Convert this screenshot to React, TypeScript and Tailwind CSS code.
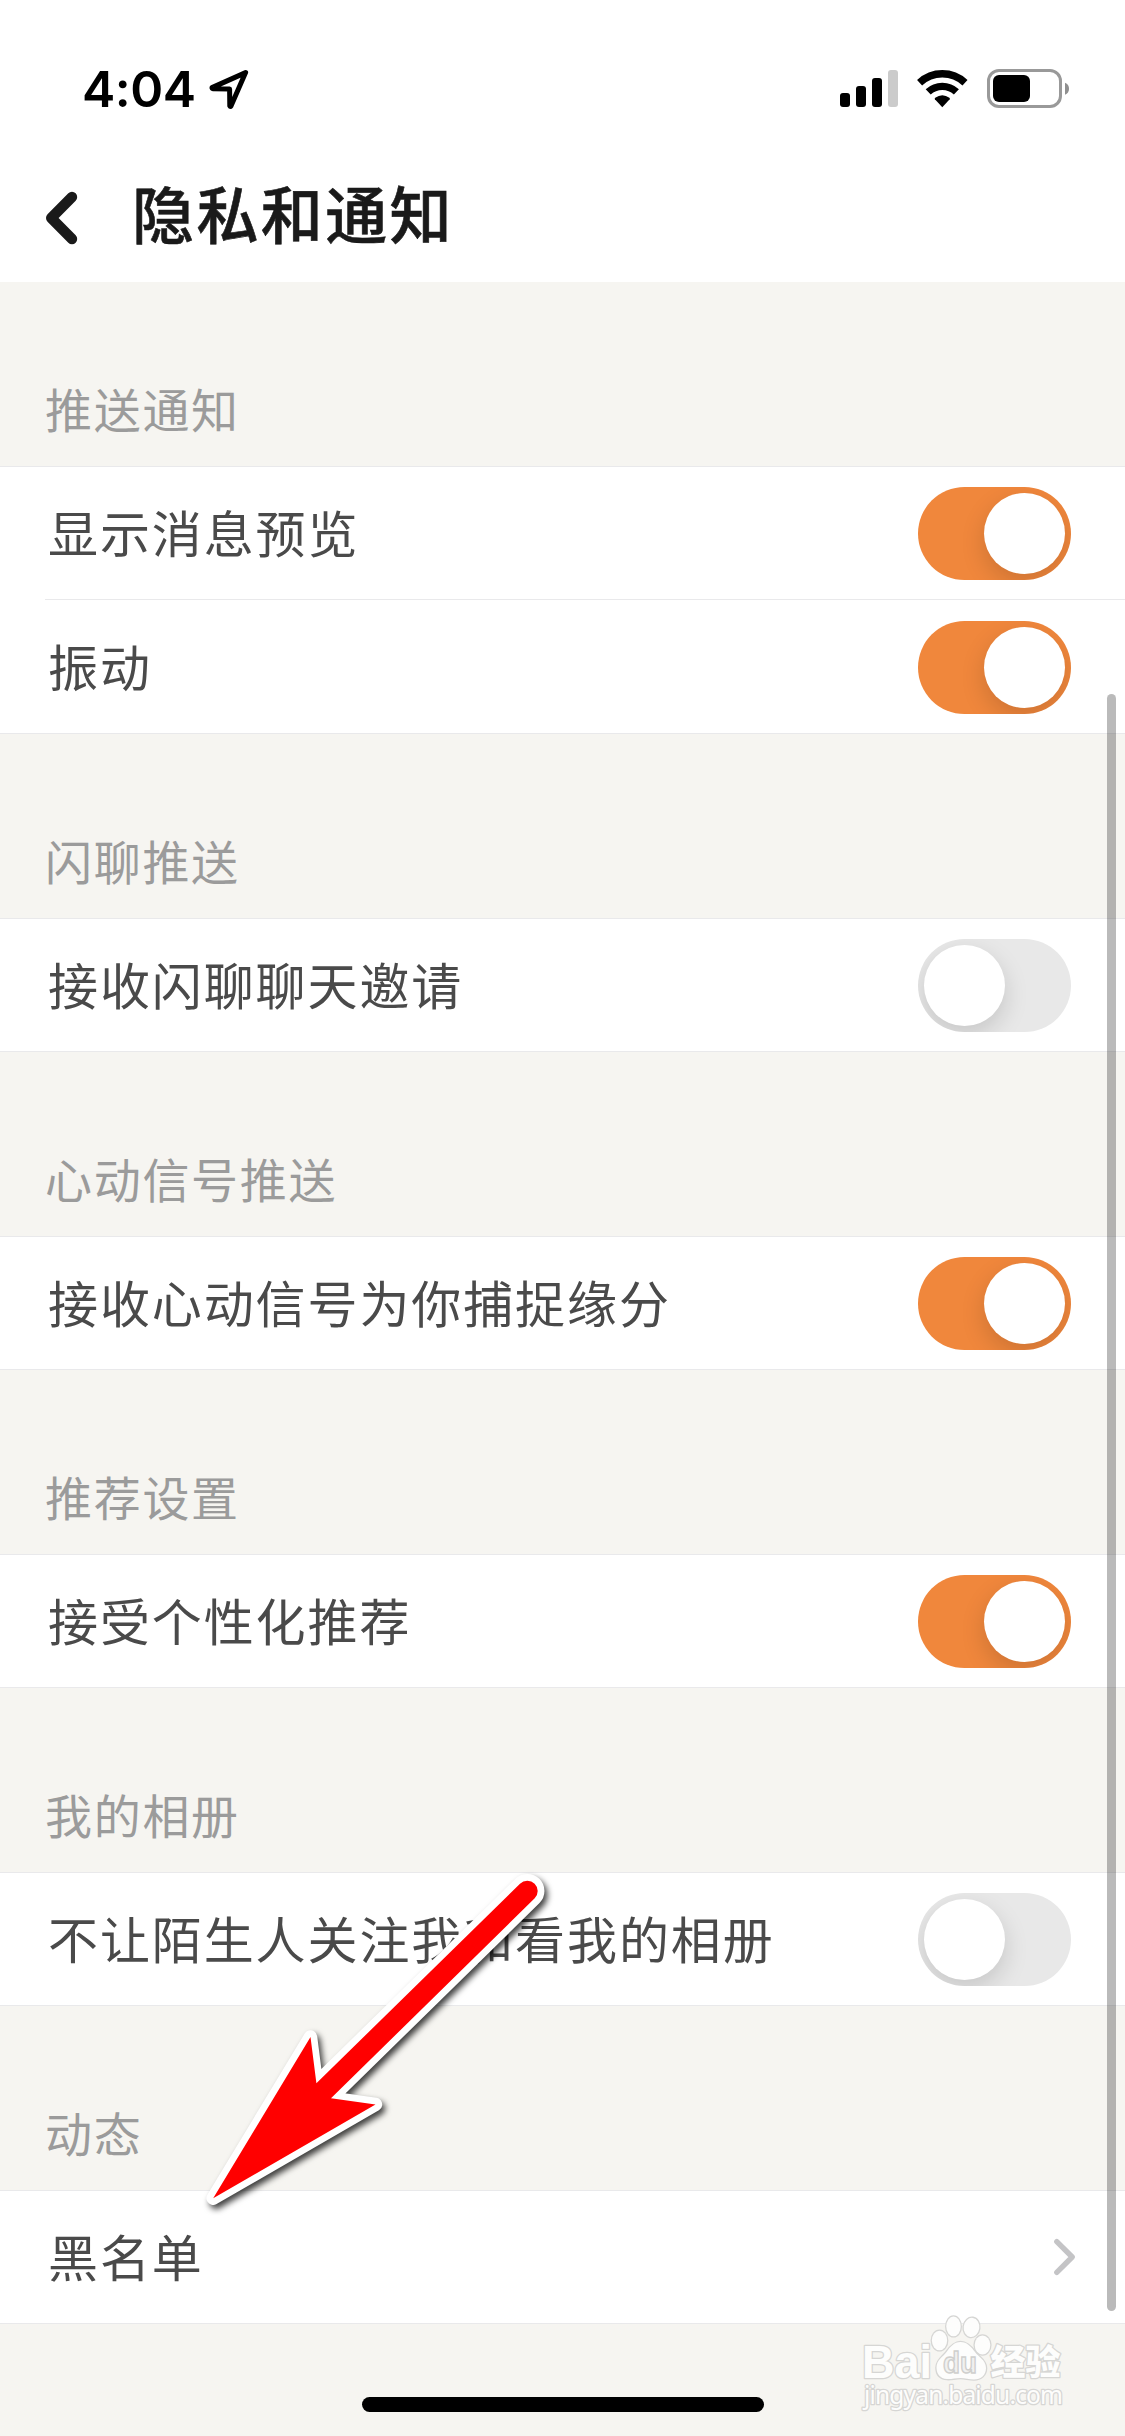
import React from "react";

type Row = { label: string; on?: boolean; link?: boolean };
type Section = { title: string; rows: Row[] };

const sections: Section[] = [
  { title: "推送通知", rows: [{ label: "显示消息预览", on: true }, { label: "振动", on: true }] },
  { title: "闪聊推送", rows: [{ label: "接收闪聊聊天邀请", on: false }] },
  { title: "心动信号推送", rows: [{ label: "接收心动信号为你捕捉缘分", on: true }] },
  { title: "推荐设置", rows: [{ label: "接受个性化推荐", on: true }] },
  { title: "我的相册", rows: [{ label: "不让陌生人关注我和看我的相册", on: false }] },
  { title: "动态", rows: [{ label: "黑名单", link: true }] },
];

function Toggle({ on }: { on?: boolean }) {
  return (
    <div
      role="switch"
      aria-checked={!!on}
      className={
        on
          ? "flex h-[93px] w-[153px] justify-end overflow-hidden rounded-full bg-[#f0873c] p-1.5"
          : "flex h-[93px] w-[153px] justify-start overflow-hidden rounded-full bg-[#e8e8e8] p-1.5"
      }
    >
      <div className="size-[81px] rounded-full bg-white shadow-[0_9px_24px_rgba(0,0,0,0.15)]" />
    </div>
  );
}

function StatusBar() {
  return (
    <div className="flex h-[152px] items-start justify-between pl-[82px] pr-[56px] text-black">
      <div className="flex pt-[63px]">
        <span className="w-[125px] whitespace-nowrap font-['Inter',sans-serif] text-[50px] font-semibold leading-[52px] tracking-[-0.5px]">
          4:04
        </span>
        <svg className="mt-[5px] h-[44px] w-[44px]" viewBox="207 68 44 44" fill="none">
          <path
            d="M245.6 72.6 212 87.6Q211.8 88.6 213 88.7L229.6 89 229.8 106Q230.3 107 231 106Z"
            stroke="#000"
            strokeWidth="5"
            strokeLinejoin="round"
          />
        </svg>
      </div>
      <svg className="mt-[66px] h-[44px] w-[230px]" viewBox="839 66 230 44">
        <rect x="840" y="93" width="10" height="14" rx="3" />
        <rect x="856" y="86" width="10" height="21" rx="3" />
        <rect x="872" y="78" width="10" height="29" rx="3" />
        <rect x="888" y="70" width="10" height="37" rx="3" fill="#cbcbcb" />
        <g fill="none" stroke="#000" strokeWidth="7.4">
          <path d="M919.6 82.7A33.3 33.3 0 0 1 965 82.7" />
          <path d="M928.2 91.9A20.7 20.7 0 0 1 956.4 91.9" />
        </g>
        <path d="M942.3 107.3 934.9 99.3Q934.4 98.5 935.2 97.8Q942.3 92.6 949.4 97.8Q950.2 98.5 949.7 99.3Z" />
        <rect x="988.5" y="70.5" width="72" height="36" rx="10.5" fill="none" stroke="#999" strokeWidth="3" />
        <rect x="993" y="75" width="37" height="27" rx="6" />
        <path d="M1065 82.8Q1069 84.5 1069 88.8T1065 94.8Z" fill="#8f8f8f" />
      </svg>
    </div>
  );
}

function RowItem({ row, first, last }: { row: Row; first: boolean; last: boolean }) {
  return (
    <div className={first ? "pl-[45px]" : "pl-[45px] pt-px"}>
      <div
        className={
          last
            ? "flex h-[132px] items-center justify-between pl-[3px]"
            : "flex h-[133px] items-center justify-between border-b border-[#e9e9eb] pl-[3px]"
        }
      >
        <span className="whitespace-nowrap pb-[5px] text-[50px] leading-[72px] tracking-[1.9px] text-[#4a4a4a]">
          {row.label}
        </span>
        {row.link ? (
          <svg className="mr-[47px] h-[40px] w-[26px]" viewBox="1052 2237 26 40" fill="none">
            <path
              d="M1056.8 2241.7 1072.2 2257 1056.8 2272.3"
              stroke="#c4c4c6"
              strokeWidth="5.4"
              strokeLinecap="round"
              strokeLinejoin="round"
            />
          </svg>
        ) : (
          <div className="mr-[54px] pt-px">
            <Toggle on={row.on} />
          </div>
        )}
      </div>
    </div>
  );
}

function Watermark() {
  return (
    <svg className="absolute left-[855px] top-[2308px] h-[110px] w-[220px]" viewBox="855 2308 220 110">
      <g fill="#fdfdfc" stroke="#d6d6d4" strokeWidth="2.6" strokeLinejoin="round" paintOrder="stroke">
        <text x="862" y="2377.5" fontSize="46" fontWeight="700" fontFamily="Liberation Sans, sans-serif" textLength="70" lengthAdjust="spacingAndGlyphs">
          Bai
        </text>
        <ellipse cx="939.5" cy="2340.5" rx="7.6" ry="9.8" />
        <ellipse cx="953.5" cy="2326.4" rx="7.2" ry="9.9" />
        <ellipse cx="971.5" cy="2327.4" rx="7.8" ry="9.6" transform="rotate(8 971.5 2327.4)" />
        <ellipse cx="982.5" cy="2345" rx="7.8" ry="9.4" />
        <path d="M960.5 2342C967 2342 971.5 2347 975 2352 978 2356.5 986 2360 986 2368 986 2375 981 2379.5 974 2379.5 969 2379.5 965 2378 960.5 2378 955 2378 951 2379.5 947 2379 940 2378.5 936.5 2374 936.5 2367.5 936.5 2360 943 2357 946.5 2352 950 2347 954 2342 960.5 2342Z" />
        <text x="990.5" y="2374.5" fontSize="35" fontWeight="900" fontFamily="Noto Sans CJK SC, sans-serif" textLength="70">
          经验
        </text>
        <text x="864" y="2404" fontSize="24.5" fontFamily="Noto Sans, sans-serif" textLength="199">
          jingyan.baidu.com
        </text>
      </g>
      <text x="943" y="2373" fontSize="29" fontWeight="700" fontFamily="Liberation Sans, sans-serif" fill="#f1f1f0" stroke="#cfcfcd" strokeWidth="1.4" textLength="34" lengthAdjust="spacingAndGlyphs">
        du
      </text>
    </svg>
  );
}

function PointerArrow() {
  return (
    <svg
      className="absolute left-[190px] top-[1860px] h-[370px] w-[380px] drop-shadow-[3px_4px_3px_rgba(0,0,0,0.75)]"
      viewBox="190 1860 380 370"
    >
      <path
        d="M213.2 2198.2 310.5 2037 316.4 2083.3 520 1883.7A10.3 10.3 0 0 1 534.7 1898.3L331 2098.3 375.5 2104.5Z"
        fill="#f00"
        stroke="#fff"
        strokeWidth="13.5"
        strokeLinejoin="round"
        paintOrder="stroke"
      />
    </svg>
  );
}

export default function App() {
  return (
    <div className="relative h-[2436px] w-[1125px] overflow-hidden bg-[#f6f5f1] font-['Noto_Sans_CJK_SC',sans-serif]">
      <header className="h-[282px] bg-white">
        <StatusBar />
        <div className="flex h-[130px] items-center pl-[44px]">
          <svg className="mt-[2px] h-[56px] w-[36px]" viewBox="44 190 36 56" fill="none">
            <path
              d="M72 197 51.2 218 72 239"
              stroke="#1a1a1a"
              strokeWidth="10.4"
              strokeLinecap="round"
              strokeLinejoin="round"
            />
          </svg>
          <h1 className="whitespace-nowrap pb-[11px] pl-[52px] text-[62px] font-medium leading-[88px] tracking-[2.4px] text-[#1a1a1a] [-webkit-text-stroke:0.6px_#1a1a1a]">
            隐私和通知
          </h1>
        </div>
      </header>

      <main>
        {sections.map((section) => (
          <section key={section.title}>
            <h2 className="flex h-[184px] items-end pb-[23px] pl-[45px] text-[47px] leading-[70px] tracking-[1.7px] text-[#9b9b9b]">
              {section.title}
            </h2>
            <div
              className={
                section.rows.length > 1
                  ? "h-[268px] border-y border-[#e9e9eb] bg-white"
                  : "h-[134px] border-y border-[#e9e9eb] bg-white"
              }
            >
              {section.rows.map((row, i) => (
                <RowItem key={row.label} row={row} first={i === 0} last={i === section.rows.length - 1} />
              ))}
            </div>
          </section>
        ))}
      </main>

      <div className="absolute left-[1107px] top-[694px] h-[1617px] w-[9px] rounded-full bg-black/27" />
      <PointerArrow />
      <Watermark />
      <div className="absolute left-[362px] top-[2397px] h-[15px] w-[402px] rounded-full bg-black" />
    </div>
  );
}
